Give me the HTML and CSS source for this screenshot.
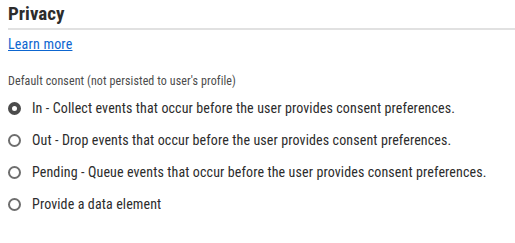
FILE: index.html
```html
<!DOCTYPE html>
<html>
<head>
<meta charset="utf-8">
<link rel="stylesheet" href="styles.css">
</head>
<body>
<section class="panel">
  <h2 class="title">Privacy</h2>
  <a class="link" href="#">Learn more</a>
  <div class="field-label">Default consent (not persisted to user's profile)</div>
  <div class="radios">
    <label class="radio"><span class="dot checked"></span><span class="text">In - Collect events that occur before the user provides consent preferences.</span></label>
    <label class="radio"><span class="dot"></span><span class="text">Out - Drop events that occur before the user provides consent preferences.</span></label>
    <label class="radio"><span class="dot"></span><span class="text">Pending - Queue events that occur before the user provides consent preferences.</span></label>
    <label class="radio"><span class="dot"></span><span class="text">Provide a data element</span></label>
  </div>
</section>
</body>
</html>
```
FILE: styles.css
```css
html, body {
  margin: 0;
  padding: 0;
  background: #ffffff;
}
body {
  font-family: Roboto, "Open Sans", sans-serif;
  font-stretch: 87.5%;
  color: #2c2c2c;
}
.panel {
  padding: 2px 0 0 8px;
  display: flex;
  flex-direction: column;
  align-items: flex-start;
}
.title {
  margin: 0;
  font-size: 19px;
  font-weight: 700;
  line-height: 24px;
  color: #2c2c2c;
  align-self: stretch;
  padding-bottom: 2px;
  border-bottom: 2px solid #e1e1e1;
}
.link {
  margin-top: 4px;
  font-size: 14px;
  line-height: 20px;
  letter-spacing: 0.2px;
  color: #0d66d0;
  text-decoration: underline;
}
.field-label {
  margin-top: 19px;
  font-size: 12px;
  line-height: 16px;
  letter-spacing: 0.1px;
  color: #4b4b4b;
}
.radios {
  margin-top: 3px;
  display: flex;
  flex-direction: column;
}
.radio {
  display: flex;
  align-items: center;
  height: 32px;
  gap: 11px;
  font-size: 14px;
  letter-spacing: 0.12px;
  white-space: nowrap;
  color: #2c2c2c;
}
.dot {
  box-sizing: border-box;
  width: 13px;
  height: 13px;
  border-radius: 50%;
  border: 2px solid #6e6e6e;
  background: #fff;
  flex: none;
}
.dot.checked {
  border: 4px solid #4b4b4b;
}
```
